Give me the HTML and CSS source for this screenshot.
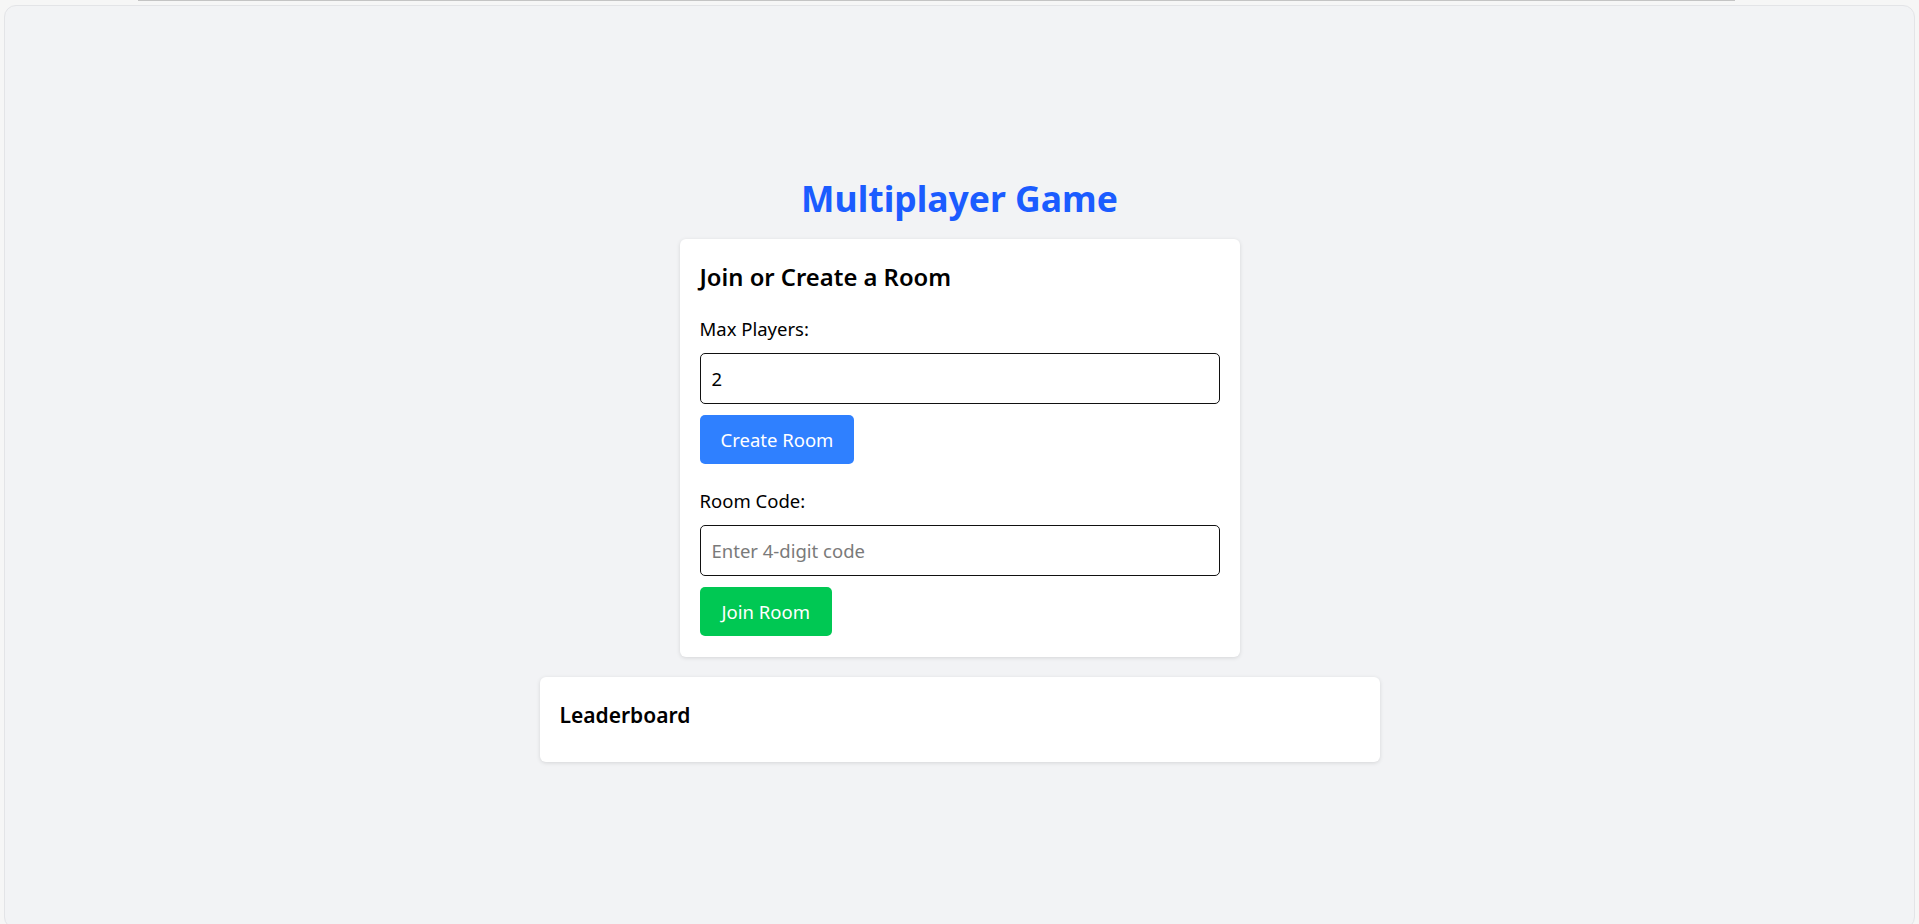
FILE: index.html
```html
<!DOCTYPE html>
<html lang="en">
<head>
<meta charset="utf-8">
<title>Multiplayer Game</title>
<link rel="stylesheet" href="styles.css">
</head>
<body>
<div class="topline"></div>
<div class="frame">
  <main class="app">
    <h1 class="title">Multiplayer Game</h1>
    <section class="card room-card">
      <h2 class="card-title">Join or Create a Room</h2>
      <label class="field-label" for="max">Max Players:</label>
      <input class="field" id="max" type="number" value="2">
      <button class="btn btn-blue" type="button">Create Room</button>
      <label class="field-label second" for="code">Room Code:</label>
      <input class="field" id="code" type="text" placeholder="Enter 4-digit code">
      <button class="btn btn-green" type="button">Join Room</button>
    </section>
    <section class="card board-card">
      <h3 class="board-title">Leaderboard</h3>
    </section>
  </main>
</div>
</body>
</html>
```
FILE: styles.css
```css
html, body {
  margin: 0;
  padding: 0;
}
body {
  background: #f6f6f6;
  font-family: "Noto Sans", "Open Sans", sans-serif;
  color: #000;
  overflow: hidden;
}
.topline {
  position: absolute;
  top: 0;
  left: 138px;
  width: 1597px;
  height: 1px;
  background: #c4c4c4;
}
.frame {
  margin: 5px 4px 0 4px;
  height: 924px;
  box-sizing: border-box;
  border: 1px solid #e3e4e7;
  border-radius: 12px;
  background: #f2f3f5;
}
.app {
  display: flex;
  flex-direction: column;
  align-items: center;
  padding-top: 167px;
}
.title {
  margin: 0 0 16px 0;
  font-size: 35.5px;
  line-height: 50px;
  font-weight: 700;
  color: #1b5cff;
}
.card {
  background: #fff;
  border-radius: 6px;
  box-shadow: 0 1px 4px rgba(0, 0, 0, 0.12);
  box-sizing: border-box;
}
.room-card {
  width: 560px;
  padding: 20px 20px 21px;
  display: flex;
  flex-direction: column;
  align-items: flex-start;
}
.card-title {
  margin: 0 0 21px 0;
  font-size: 23.8px;
  line-height: 36px;
  font-weight: 600;
}
.field-label {
  font-size: 18.5px;
  line-height: 26px;
  margin-bottom: 11px;
}
.field-label.second {
  margin-top: 24px;
}
.field {
  width: 100%;
  box-sizing: border-box;
  height: 51px;
  padding: 0 11px;
  border: 1px solid #111;
  border-radius: 5px;
  font-family: inherit;
  font-size: 18.5px;
  color: #000;
  background: #fff;
  outline: none;
  -moz-appearance: textfield;
}
.field::-webkit-outer-spin-button,
.field::-webkit-inner-spin-button {
  -webkit-appearance: none;
  margin: 0;
}
.field::placeholder {
  color: #7a7a7a;
}
.btn {
  margin-top: 11px;
  height: 49px;
  padding: 0 21px;
  border: none;
  border-radius: 5px;
  font-family: inherit;
  font-size: 18.5px;
  color: #fff;
  cursor: pointer;
}
.btn-blue {
  background: #2f80ff;
}
.btn-green {
  background: #00c853;
  padding: 0 22px;
}
.board-card {
  width: 840px;
  margin-top: 20px;
  padding: 20px 20px;
  height: 85px;
}
.board-title {
  margin: 0;
  font-size: 21px;
  line-height: 36px;
  font-weight: 600;
}
```
